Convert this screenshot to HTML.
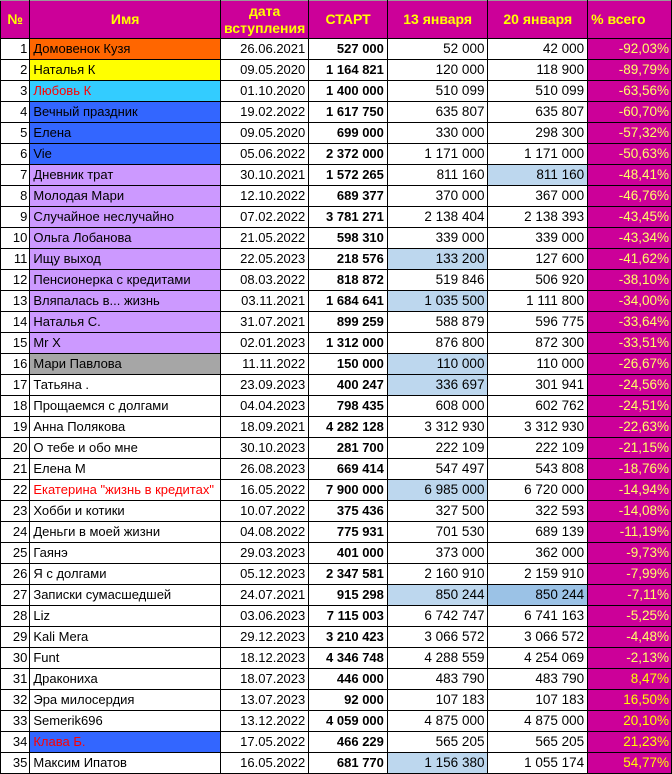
<!DOCTYPE html>
<html><head><meta charset="utf-8"><style>
html,body{margin:0;padding:0;background:#fff;width:672px;height:774px;overflow:hidden}
table{border-collapse:collapse;table-layout:fixed;font-family:"Liberation Sans",sans-serif;font-size:13px;color:#000;margin-left:0}
td,th{border:1px solid #000;padding:0 3px;height:20px;line-height:20px;white-space:nowrap;overflow:hidden}
th{background:#cc0099;color:#ffff00;font-weight:bold;height:37px;line-height:17px;font-size:14px;border-top:1px solid #999}
td.n{text-align:right;padding-right:2px}
td.d,td.s,td.v{text-align:right}
td.s{font-weight:bold;font-family:"Liberation Sans Narrow","Liberation Sans",sans-serif;font-size:13px}
td.v{font-size:13.5px}
td.p{background:#cc0099;color:#ffff66;text-align:right;padding-right:2px;font-size:13.5px}
td.pp{color:#ffff00}
.o{background:#ff6600}.y{background:#ffff00}.c{background:#33ccff}.b{background:#3366ff}.l{background:#cc99ff}.g{background:#a6a6a6}
.r{color:#ff0000}
.lb{background:#bdd7ee}.db{background:#9bc2e6}
</style></head><body>
<table>
<colgroup><col style="width:30px"><col style="width:191px"><col style="width:78px"><col style="width:80px"><col style="width:103px"><col style="width:102px"><col style="width:86px"></colgroup>
<tr><th>№</th><th>Имя</th><th>дата<br>вступления</th><th>СТАРТ</th><th>13 января</th><th>20 января</th><th style="text-align:left">% всего</th></tr>
<tr><td class="n">1</td><td class="o">Домовенок Кузя</td><td class="d">26.06.2021</td><td class="s">527 000</td><td class="v">52 000</td><td class="v">42 000</td><td class="p">-92,03%</td></tr>
<tr><td class="n">2</td><td class="y">Наталья К</td><td class="d">09.05.2020</td><td class="s">1 164 821</td><td class="v">120 000</td><td class="v">118 900</td><td class="p">-89,79%</td></tr>
<tr><td class="n">3</td><td class="c r">Любовь К</td><td class="d">01.10.2020</td><td class="s">1 400 000</td><td class="v">510 099</td><td class="v">510 099</td><td class="p">-63,56%</td></tr>
<tr><td class="n">4</td><td class="b">Вечный праздник</td><td class="d">19.02.2022</td><td class="s">1 617 750</td><td class="v">635 807</td><td class="v">635 807</td><td class="p">-60,70%</td></tr>
<tr><td class="n">5</td><td class="b">Елена</td><td class="d">09.05.2020</td><td class="s">699 000</td><td class="v">330 000</td><td class="v">298 300</td><td class="p">-57,32%</td></tr>
<tr><td class="n">6</td><td class="b">Vie</td><td class="d">05.06.2022</td><td class="s">2 372 000</td><td class="v">1 171 000</td><td class="v">1 171 000</td><td class="p">-50,63%</td></tr>
<tr><td class="n">7</td><td class="l">Дневник трат</td><td class="d">30.10.2021</td><td class="s">1 572 265</td><td class="v">811 160</td><td class="v lb">811 160</td><td class="p">-48,41%</td></tr>
<tr><td class="n">8</td><td class="l">Молодая Мари</td><td class="d">12.10.2022</td><td class="s">689 377</td><td class="v">370 000</td><td class="v">367 000</td><td class="p">-46,76%</td></tr>
<tr><td class="n">9</td><td class="l">Случайное неслучайно</td><td class="d">07.02.2022</td><td class="s">3 781 271</td><td class="v">2 138 404</td><td class="v">2 138 393</td><td class="p">-43,45%</td></tr>
<tr><td class="n">10</td><td class="l">Ольга Лобанова</td><td class="d">21.05.2022</td><td class="s">598 310</td><td class="v">339 000</td><td class="v">339 000</td><td class="p">-43,34%</td></tr>
<tr><td class="n">11</td><td class="l">Ищу выход</td><td class="d">22.05.2023</td><td class="s">218 576</td><td class="v lb">133 200</td><td class="v">127 600</td><td class="p">-41,62%</td></tr>
<tr><td class="n">12</td><td class="l">Пенсионерка с кредитами</td><td class="d">08.03.2022</td><td class="s">818 872</td><td class="v">519 846</td><td class="v">506 920</td><td class="p">-38,10%</td></tr>
<tr><td class="n">13</td><td class="l">Вляпалась в... жизнь</td><td class="d">03.11.2021</td><td class="s">1 684 641</td><td class="v lb">1 035 500</td><td class="v">1 111 800</td><td class="p">-34,00%</td></tr>
<tr><td class="n">14</td><td class="l">Наталья С.</td><td class="d">31.07.2021</td><td class="s">899 259</td><td class="v">588 879</td><td class="v">596 775</td><td class="p">-33,64%</td></tr>
<tr><td class="n">15</td><td class="l">Mr X</td><td class="d">02.01.2023</td><td class="s">1 312 000</td><td class="v">876 800</td><td class="v">872 300</td><td class="p">-33,51%</td></tr>
<tr><td class="n">16</td><td class="g">Мари Павлова</td><td class="d">11.11.2022</td><td class="s">150 000</td><td class="v lb">110 000</td><td class="v">110 000</td><td class="p">-26,67%</td></tr>
<tr><td class="n">17</td><td>Татьяна .</td><td class="d">23.09.2023</td><td class="s">400 247</td><td class="v lb">336 697</td><td class="v">301 941</td><td class="p">-24,56%</td></tr>
<tr><td class="n">18</td><td>Прощаемся с долгами</td><td class="d">04.04.2023</td><td class="s">798 435</td><td class="v">608 000</td><td class="v">602 762</td><td class="p">-24,51%</td></tr>
<tr><td class="n">19</td><td>Анна Полякова</td><td class="d">18.09.2021</td><td class="s">4 282 128</td><td class="v">3 312 930</td><td class="v">3 312 930</td><td class="p">-22,63%</td></tr>
<tr><td class="n">20</td><td>О тебе и обо мне</td><td class="d">30.10.2023</td><td class="s">281 700</td><td class="v">222 109</td><td class="v">222 109</td><td class="p">-21,15%</td></tr>
<tr><td class="n">21</td><td>Елена М</td><td class="d">26.08.2023</td><td class="s">669 414</td><td class="v">547 497</td><td class="v">543 808</td><td class="p">-18,76%</td></tr>
<tr><td class="n">22</td><td class="r">Екатерина "жизнь в кредитах"</td><td class="d">16.05.2022</td><td class="s">7 900 000</td><td class="v lb">6 985 000</td><td class="v">6 720 000</td><td class="p">-14,94%</td></tr>
<tr><td class="n">23</td><td>Хобби и котики</td><td class="d">10.07.2022</td><td class="s">375 436</td><td class="v">327 500</td><td class="v">322 593</td><td class="p">-14,08%</td></tr>
<tr><td class="n">24</td><td>Деньги в моей жизни</td><td class="d">04.08.2022</td><td class="s">775 931</td><td class="v">701 530</td><td class="v">689 139</td><td class="p">-11,19%</td></tr>
<tr><td class="n">25</td><td>Гаянэ</td><td class="d">29.03.2023</td><td class="s">401 000</td><td class="v">373 000</td><td class="v">362 000</td><td class="p">-9,73%</td></tr>
<tr><td class="n">26</td><td>Я с долгами</td><td class="d">05.12.2023</td><td class="s">2 347 581</td><td class="v">2 160 910</td><td class="v">2 159 910</td><td class="p">-7,99%</td></tr>
<tr><td class="n">27</td><td>Записки сумасшедшей</td><td class="d">24.07.2021</td><td class="s">915 298</td><td class="v lb">850 244</td><td class="v db">850 244</td><td class="p">-7,11%</td></tr>
<tr><td class="n">28</td><td>Liz</td><td class="d">03.06.2023</td><td class="s">7 115 003</td><td class="v">6 742 747</td><td class="v">6 741 163</td><td class="p">-5,25%</td></tr>
<tr><td class="n">29</td><td>Kali Mera</td><td class="d">29.12.2023</td><td class="s">3 210 423</td><td class="v">3 066 572</td><td class="v">3 066 572</td><td class="p">-4,48%</td></tr>
<tr><td class="n">30</td><td>Funt</td><td class="d">18.12.2023</td><td class="s">4 346 748</td><td class="v">4 288 559</td><td class="v">4 254 069</td><td class="p">-2,13%</td></tr>
<tr><td class="n">31</td><td>Дракониха</td><td class="d">18.07.2023</td><td class="s">446 000</td><td class="v">483 790</td><td class="v">483 790</td><td class="p pp">8,47%</td></tr>
<tr><td class="n">32</td><td>Эра милосердия</td><td class="d">13.07.2023</td><td class="s">92 000</td><td class="v">107 183</td><td class="v">107 183</td><td class="p pp">16,50%</td></tr>
<tr><td class="n">33</td><td>Semerik696</td><td class="d">13.12.2022</td><td class="s">4 059 000</td><td class="v">4 875 000</td><td class="v">4 875 000</td><td class="p pp">20,10%</td></tr>
<tr><td class="n">34</td><td class="b r">Клава Б.</td><td class="d">17.05.2022</td><td class="s">466 229</td><td class="v">565 205</td><td class="v">565 205</td><td class="p pp">21,23%</td></tr>
<tr><td class="n">35</td><td>Максим Ипатов</td><td class="d">16.05.2022</td><td class="s">681 770</td><td class="v lb">1 156 380</td><td class="v">1 055 174</td><td class="p pp">54,77%</td></tr>
</table>
</body></html>
